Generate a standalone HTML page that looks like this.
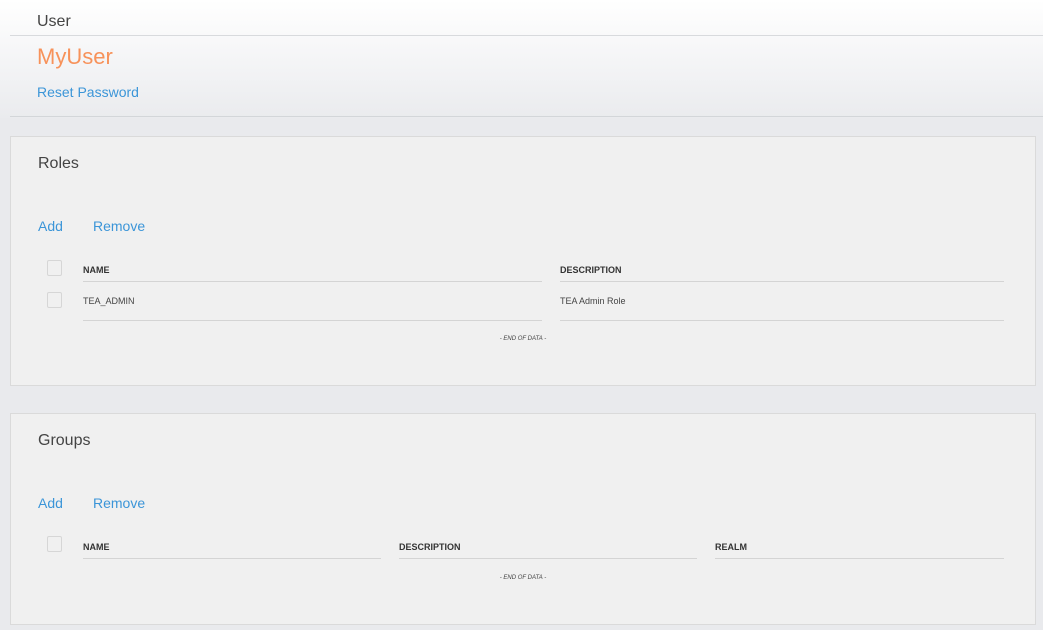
<!DOCTYPE html>
<html><head><style>
*{margin:0;padding:0;box-sizing:border-box}
body{width:1043px;height:630px;overflow:hidden;background:#e9eaed;font-family:"Liberation Sans",sans-serif;position:relative}
.hdr{position:absolute;left:0;top:0;width:1043px;height:118px;background:linear-gradient(#fff,#eaebee)}
.a{position:absolute;white-space:nowrap}
.ln{position:absolute;height:1px;background:#d8dadd}
.panel{position:absolute;left:10px;width:1026px;background:#f0f0f0;border:1px solid #dadada}
.cb{position:absolute;width:15px;height:16px;border:1px solid #d6d6d6;border-radius:2px;background:#f0f0f0}
.th{position:absolute;font-size:9px;font-weight:bold;color:#333}
.tl{position:absolute;height:1px;background:#d4d4d4}
.blue{color:#3b95d8}
.eod{position:absolute;font-size:6px;font-style:italic;color:#444;width:100%;text-align:center}
</style></head><body>
<div class="hdr"></div>
<div class="a" style="left:37px;top:13px;font-size:16px;color:#444">User</div>
<div class="ln" style="left:10px;top:35px;width:1033px"></div>
<div class="a" style="left:37px;top:44px;font-size:22px;color:#f7925a">MyUser</div>
<div class="a blue" style="left:37px;top:84px;font-size:14px">Reset Password</div>
<div class="ln" style="left:10px;top:116px;width:1033px;background:#d3d6d9"></div>

<div class="panel" style="top:136px;height:250px">
 <div class="a" style="left:27px;top:18px;font-size:16px;color:#444">Roles</div>
 <div class="a blue" style="left:27px;top:81px;font-size:14px">Add</div>
 <div class="a blue" style="left:82px;top:81px;font-size:14px">Remove</div>
 <div class="cb" style="left:36px;top:123px"></div>
 <div class="th" style="left:72px;top:128px">NAME</div>
 <div class="th" style="left:549px;top:128px">DESCRIPTION</div>
 <div class="tl" style="left:72px;top:144px;width:459px"></div>
 <div class="tl" style="left:549px;top:144px;width:444px"></div>
 <div class="cb" style="left:36px;top:155px"></div>
 <div class="a" style="left:72px;top:159px;font-size:9px;color:#444">TEA_ADMIN</div>
 <div class="a" style="left:549px;top:159px;font-size:9px;color:#444">TEA Admin Role</div>
 <div class="tl" style="left:72px;top:183px;width:459px"></div>
 <div class="tl" style="left:549px;top:183px;width:444px"></div>
 <div class="eod" style="left:0;top:199px">- END OF DATA -</div>
</div>

<div class="panel" style="top:413px;height:212px">
 <div class="a" style="left:27px;top:18px;font-size:16px;color:#444">Groups</div>
 <div class="a blue" style="left:27px;top:81px;font-size:14px">Add</div>
 <div class="a blue" style="left:82px;top:81px;font-size:14px">Remove</div>
 <div class="cb" style="left:36px;top:122px"></div>
 <div class="th" style="left:72px;top:128px">NAME</div>
 <div class="th" style="left:388px;top:128px">DESCRIPTION</div>
 <div class="th" style="left:704px;top:128px">REALM</div>
 <div class="tl" style="left:72px;top:144px;width:298px"></div>
 <div class="tl" style="left:388px;top:144px;width:298px"></div>
 <div class="tl" style="left:704px;top:144px;width:289px"></div>
 <div class="eod" style="left:0;top:161px">- END OF DATA -</div>
</div>
</body></html>
